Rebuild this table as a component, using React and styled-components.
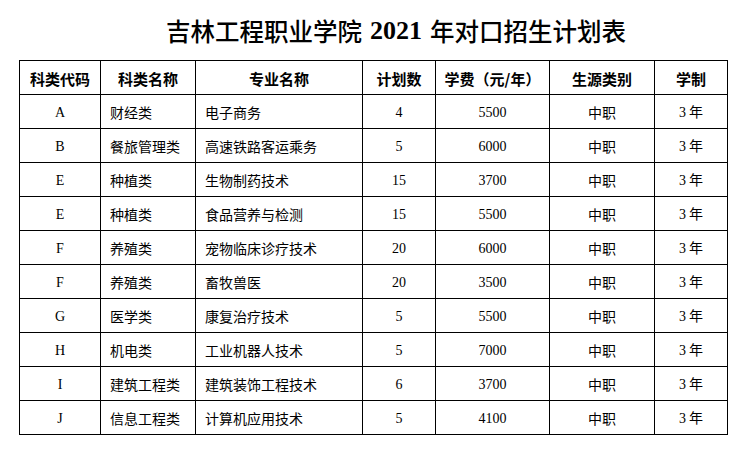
import React from "react";
import styled, { createGlobalStyle } from "styled-components";

const Global = createGlobalStyle`
  html, body { margin: 0; padding: 0; background: #fff; }
  body { font-family: "Noto Sans CJK SC", sans-serif; color: #000; }
`;

const Page = styled.div`
  width: 744px;
  height: 456px;
  box-sizing: border-box;
  padding-left: 19px;
`;

const Title = styled.h1`
  margin: 0;
  height: 60px;
  box-sizing: border-box;
  padding: 2px 0 0 46px;
  display: flex;
  align-items: center;
  justify-content: center;
  font-family: "Noto Sans CJK SC", sans-serif;
  font-weight: 500;
  font-size: 24.5px;
  line-height: 1;
  width: 708px;
  white-space: nowrap;
`;

const Num = styled.span`
  font-family: "Liberation Serif", serif;
  font-weight: 700;
  font-size: 26px;
  margin: 0 8px;
`;

const Table = styled.table`
  border-collapse: collapse;
  table-layout: fixed;
  width: 708px;
`;

const Th = styled.th`
  border: 1px solid #000;
  height: 34px;
  padding: 2px 0 0;
  font-family: "Noto Sans CJK SC", sans-serif;
  font-weight: 700;
  font-size: 15px;
  line-height: 18px;
  text-align: center;
  vertical-align: middle;
  box-sizing: border-box;
`;

const Td = styled.td`
  border: 1px solid #000;
  height: 34px;
  padding: 0 0 0 ${(p) => (p.$left ? "9px" : "0")};
  font-family: "Noto Sans CJK SC", sans-serif;
  font-size: 14px;
  line-height: 18px;
  text-align: ${(p) => (p.$left ? "left" : "center")};
  vertical-align: middle;
  white-space: nowrap;
  box-sizing: border-box;
`;

const Latin = styled.span`
  font-family: "Liberation Serif", serif;
  font-size: 14px;
`;

const widths = [81, 95, 167, 73, 114, 105, 73];
const headers = ["科类代码", "科类名称", "专业名称", "计划数", "学费（元/年）", "生源类别", "学制"];

const rows = [
  ["A", "财经类", "电子商务", "4", "5500"],
  ["B", "餐旅管理类", "高速铁路客运乘务", "5", "6000"],
  ["E", "种植类", "生物制药技术", "15", "3700"],
  ["E", "种植类", "食品营养与检测", "15", "5500"],
  ["F", "养殖类", "宠物临床诊疗技术", "20", "6000"],
  ["F", "养殖类", "畜牧兽医", "20", "3500"],
  ["G", "医学类", "康复治疗技术", "5", "5500"],
  ["H", "机电类", "工业机器人技术", "5", "7000"],
  ["I", "建筑工程类", "建筑装饰工程技术", "6", "3700"],
  ["J", "信息工程类", "计算机应用技术", "5", "4100"],
];

export default function App() {
  return (
    <>
      <Global />
      <Page>
        <Title>
          吉林工程职业学院<Num>2021</Num>年对口招生计划表
        </Title>
        <Table>
          <colgroup>
            {widths.map((w, i) => (
              <col key={i} style={{ width: w }} />
            ))}
          </colgroup>
          <thead>
            <tr>
              {headers.map((h) => (
                <Th key={h}>{h}</Th>
              ))}
            </tr>
          </thead>
          <tbody>
            {rows.map((r, i) => (
              <tr key={i}>
                <Td><Latin>{r[0]}</Latin></Td>
                <Td $left>{r[1]}</Td>
                <Td $left>{r[2]}</Td>
                <Td><Latin>{r[3]}</Latin></Td>
                <Td><Latin>{r[4]}</Latin></Td>
                <Td>中职</Td>
                <Td><Latin>3</Latin> 年</Td>
              </tr>
            ))}
          </tbody>
        </Table>
      </Page>
    </>
  );
}
